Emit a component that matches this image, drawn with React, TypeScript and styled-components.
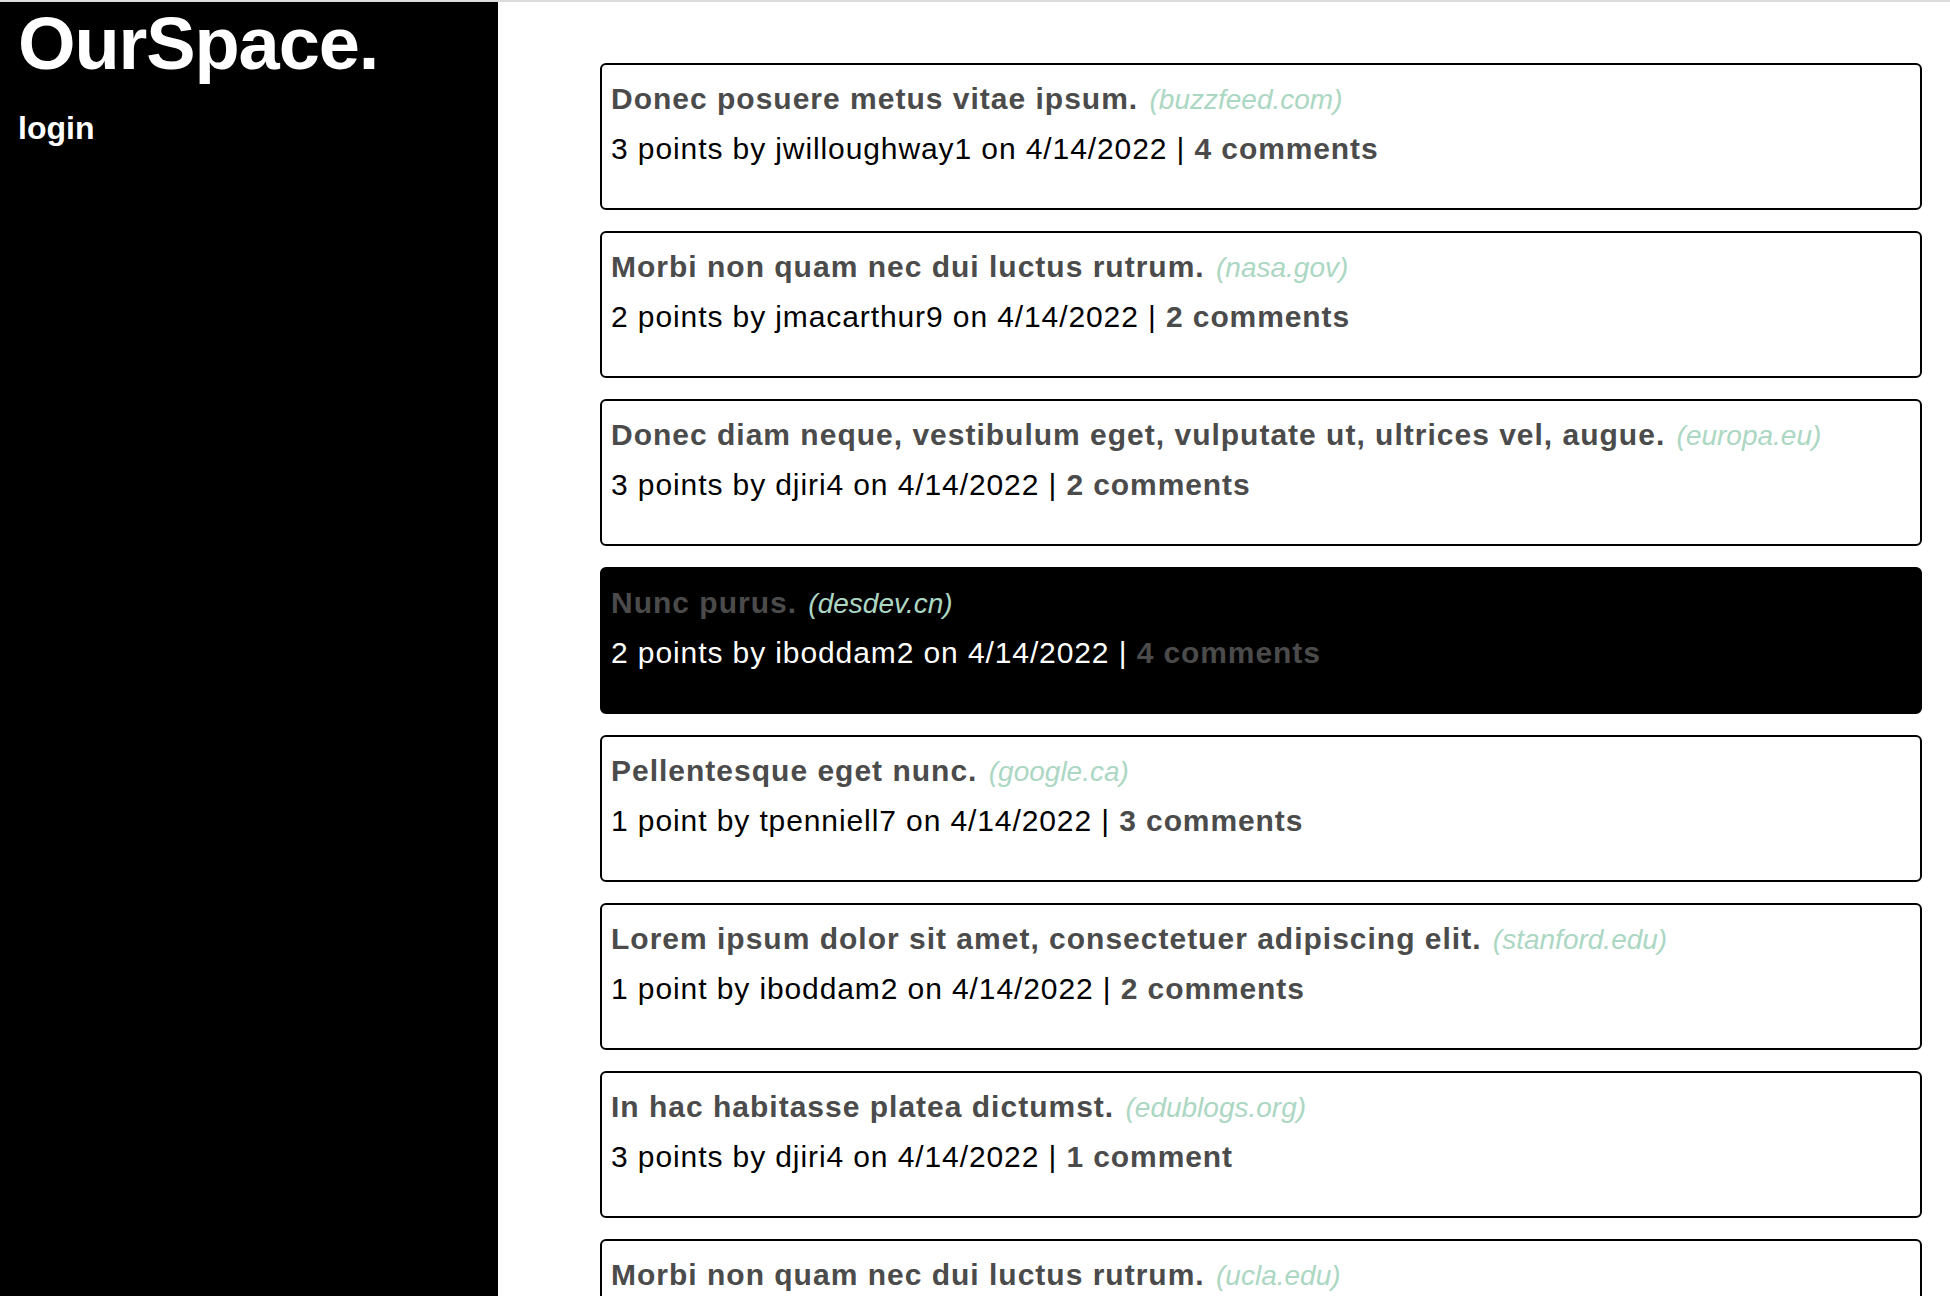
import React from "react";
import styled, { createGlobalStyle } from "styled-components";

const GlobalStyle = createGlobalStyle`
  html, body {
    margin: 0;
    padding: 0;
    background: #ffffff;
    font-family: "Liberation Sans", Arial, Helvetica, sans-serif;
  }
  * { box-sizing: border-box; }
`;

const Page = styled.div`
  display: flex;
  flex-direction: column;
  height: 100vh;
  overflow: hidden;
`;

const TopRule = styled.div`
  flex: none;
  height: 2px;
  background: #dcdcdc;
`;

const Layout = styled.div`
  flex: 1;
  display: flex;
  min-height: 0;
`;

const Sidebar = styled.aside`
  flex: none;
  width: 498px;
  background: #000000;
  color: #ffffff;
  padding: 5px 18px;
`;

const Brand = styled.h1`
  margin: 0;
  font-size: 74px;
  line-height: 74px;
  font-weight: 700;
  letter-spacing: -1.1px;
`;

const NavLink = styled.a`
  display: block;
  margin-top: 29px;
  font-size: 32px;
  line-height: 37px;
  font-weight: 700;
  color: #ffffff;
  text-decoration: none;
`;

const Feed = styled.main`
  flex: 1;
  overflow-y: auto;
  scrollbar-width: none;
  padding: 61px 28px 40px 102px;
  display: flex;
  flex-direction: column;
  gap: 21px;
`;

const Card = styled.article<{ $active?: boolean }>`
  flex: none;
  height: 147px;
  border: 2px solid #000000;
  border-radius: 6px;
  padding: 18px 9px 0;
  background: ${(p) => (p.$active ? "#000000" : "#ffffff")};
  color: ${(p) => (p.$active ? "#ffffff" : "#000000")};
`;

const TitleRow = styled.div`
  font-size: 30px;
  line-height: 32px;
  white-space: nowrap;
`;

const Title = styled.a`
  font-weight: 700;
  letter-spacing: 1px;
  color: #4b4b4b;
  text-decoration: none;
`;

const Domain = styled.span`
  font-style: italic;
  font-size: 28px;
  color: #acd7c3;
  margin-left: 3px;
`;

const Meta = styled.div`
  margin-top: 17px;
  font-size: 30px;
  line-height: 32px;
  letter-spacing: 0.9px;
  white-space: nowrap;
`;

const Comments = styled.a`
  font-weight: 700;
  color: #4b4b4b;
  text-decoration: none;
`;

type Post = {
  title: string;
  domain: string;
  points: number;
  user: string;
  date: string;
  comments: number;
};

const posts: Post[] = [
  { title: "Donec posuere metus vitae ipsum.", domain: "buzzfeed.com", points: 3, user: "jwilloughway1", date: "4/14/2022", comments: 4 },
  { title: "Morbi non quam nec dui luctus rutrum.", domain: "nasa.gov", points: 2, user: "jmacarthur9", date: "4/14/2022", comments: 2 },
  { title: "Donec diam neque, vestibulum eget, vulputate ut, ultrices vel, augue.", domain: "europa.eu", points: 3, user: "djiri4", date: "4/14/2022", comments: 2 },
  { title: "Nunc purus.", domain: "desdev.cn", points: 2, user: "iboddam2", date: "4/14/2022", comments: 4 },
  { title: "Pellentesque eget nunc.", domain: "google.ca", points: 1, user: "tpenniell7", date: "4/14/2022", comments: 3 },
  { title: "Lorem ipsum dolor sit amet, consectetuer adipiscing elit.", domain: "stanford.edu", points: 1, user: "iboddam2", date: "4/14/2022", comments: 2 },
  { title: "In hac habitasse platea dictumst.", domain: "edublogs.org", points: 3, user: "djiri4", date: "4/14/2022", comments: 1 },
  { title: "Morbi non quam nec dui luctus rutrum.", domain: "ucla.edu", points: 2, user: "jmacarthur9", date: "4/14/2022", comments: 3 },
];

export default function App() {
  return (
    <>
      <GlobalStyle />
      <Page>
        <TopRule />
        <Layout>
          <Sidebar>
            <Brand>OurSpace.</Brand>
            <NavLink href="#">login</NavLink>
          </Sidebar>
          <Feed>
            {posts.map((p, i) => (
              <Card key={i} $active={i === 3}>
                <TitleRow>
                  <Title href="#">{p.title}</Title>{" "}
                  <Domain>({p.domain})</Domain>
                </TitleRow>
                <Meta>
                  {p.points} {p.points === 1 ? "point" : "points"} by {p.user} on {p.date} |{" "}
                  <Comments href="#">
                    {p.comments} {p.comments === 1 ? "comment" : "comments"}
                  </Comments>
                </Meta>
              </Card>
            ))}
          </Feed>
        </Layout>
      </Page>
    </>
  );
}
